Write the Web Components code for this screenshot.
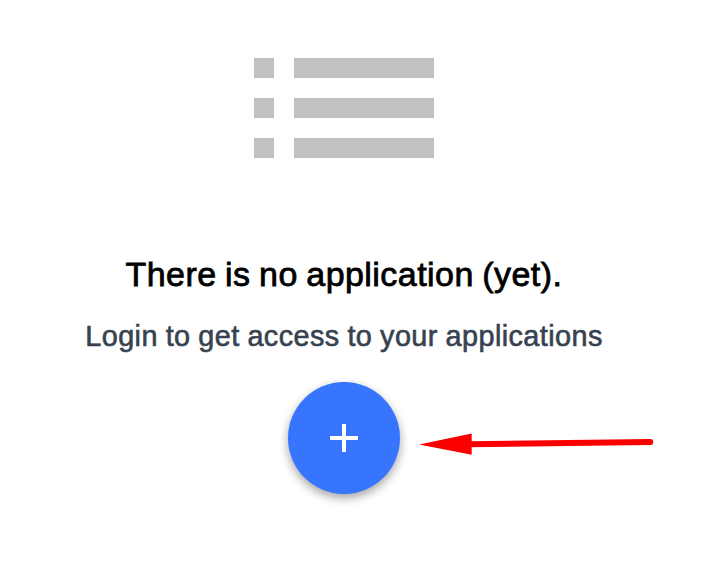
<!DOCTYPE html>
<html lang="en">
<head>
<meta charset="utf-8">
<title>Applications</title>
<style>
html, body { margin: 0; background: #fff; }
body { width: 722px; height: 584px; overflow: hidden; position: relative; font-family: "Liberation Sans", Arial, sans-serif; }
</style>
</head>
<body>
<empty-state>
  <list-glyph slot="icon"></list-glyph>
  <span slot="title">There is no application (yet).</span>
  <span slot="text">Login to get access to your applications</span>
  <add-button slot="action"></add-button>
</empty-state>
<pointer-arrow></pointer-arrow>
<script>
function define(name, html) {
  const template = document.createElement('template');
  template.innerHTML = html;
  customElements.define(name, class extends HTMLElement {
    constructor() {
      super();
      this.attachShadow({ mode: 'open' }).append(template.content.cloneNode(true));
    }
  });
}

define('list-glyph', `
<style>
:host { display: grid; grid-template-columns: 20px 140px; grid-auto-rows: 20px; gap: 20px; }
i { background: #c1c1c1; }
</style>
<i></i><i></i><i></i><i></i><i></i><i></i>`);

define('add-button', `
<style>
:host { display: block; }
button { display: grid; place-items: center; width: 112px; height: 112px; padding: 0; border: 0; border-radius: 50%;
  background: #3875ff; box-shadow: 0 4px 12px rgba(0,0,0,.14), 0 4px 8px rgba(0,0,0,.24); }
svg { display: block; }
</style>
<button aria-label="Add"><svg width="28" height="28" viewBox="0 0 28 28"><path d="M12 0h4v12h12v4H16v12h-4V16H0v-4h12z" fill="#fff"/></svg></button>`);

define('empty-state', `
<style>
:host { display: flex; flex-direction: column; align-items: center; width: 688px; padding-top: 58px; }
h1, p { margin: 0; font-weight: 400; white-space: nowrap; }
h1 { margin-top: 96px; font-size: 34px; line-height: 40px; letter-spacing: .45px; word-spacing: -1.4px; color: #000; -webkit-text-stroke: .8px #000; }
p { margin-top: 25px; font-size: 28.8px; line-height: 34px; letter-spacing: .42px; word-spacing: -.6px; color: #36424f; -webkit-text-stroke: .6px #36424f; }
.action { margin-top: 29px; }
</style>
<slot name="icon"></slot>
<h1><slot name="title"></slot></h1>
<p><slot name="text"></slot></p>
<div class="action"><slot name="action"></slot></div>`);

define('pointer-arrow', `
<style>
:host { position: absolute; left: 418px; top: 430px; }
svg { display: block; }
</style>
<svg width="240" height="28" viewBox="0 0 240 28"><path d="M50 14.2 L232.3 12" stroke="#fa0000" stroke-width="6" stroke-linecap="round"/><path d="M1 14.5 L53.7 3.6 V24.8 Z" fill="#fa0000"/></svg>`);
</script>
</body>
</html>
